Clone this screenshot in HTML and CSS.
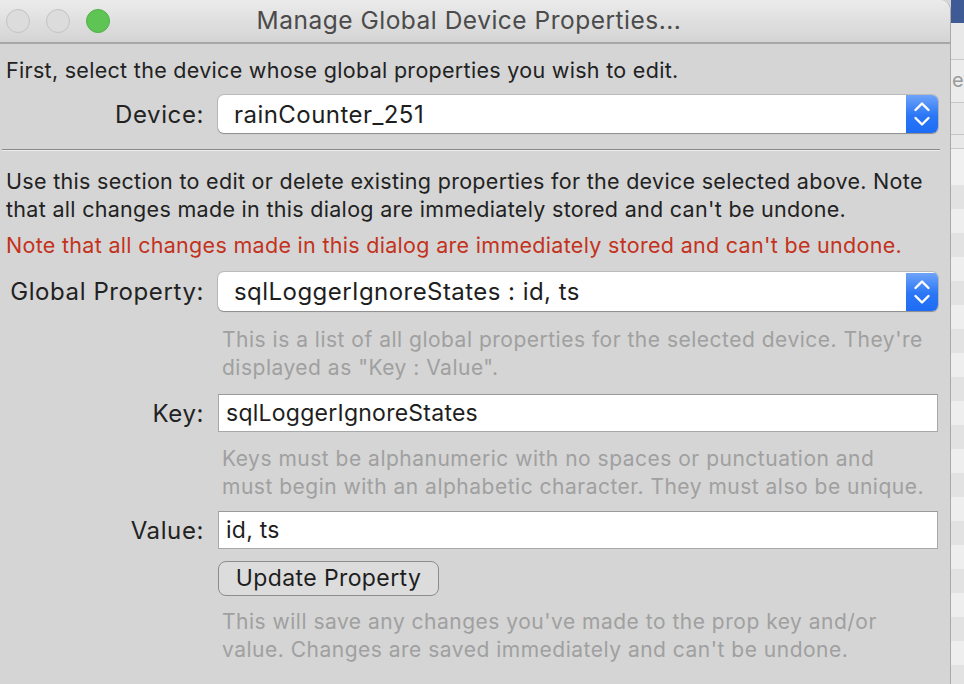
FILE: index.html
```html
<!DOCTYPE html>
<html>
<head>
<meta charset="utf-8">
<link rel="stylesheet" href="styles.css">
</head>
<body>
<div class="screen">
  <div class="window">
    <div class="titlebar">
      <div class="lights">
        <span class="light"></span>
        <span class="light"></span>
        <span class="light green"></span>
      </div>
      <div class="title">Manage Global Device Properties...</div>
    </div>
    <div class="content">
      <p class="intro">First, select the device whose global properties you wish to edit.</p>
      <div class="row row-device">
        <label class="label">Device:</label>
        <div class="select">
          <span class="select-text">rainCounter_251</span>
          <span class="stepper">
            <svg width="32" height="38" viewBox="0 0 32 38"><path d="M9.5 15 L16 8.5 L22.5 15" fill="none" stroke="#fff" stroke-width="2.4" stroke-linecap="round" stroke-linejoin="round"/><path d="M9.5 23 L16 29.5 L22.5 23" fill="none" stroke="#fff" stroke-width="2.4" stroke-linecap="round" stroke-linejoin="round"/></svg>
          </span>
        </div>
      </div>
      <div class="separator"></div>
      <p class="para">Use this section to edit or delete existing properties for the device selected above. Note that all changes made in this dialog are immediately stored and can't be undone.</p>
      <p class="warn">Note that all changes made in this dialog are immediately stored and can't be undone.</p>
      <div class="row row-prop">
        <label class="label">Global Property:</label>
        <div class="select">
          <span class="select-text">sqlLoggerIgnoreStates : id, ts</span>
          <span class="stepper">
            <svg width="32" height="38" viewBox="0 0 32 38"><path d="M9.5 15 L16 8.5 L22.5 15" fill="none" stroke="#fff" stroke-width="2.4" stroke-linecap="round" stroke-linejoin="round"/><path d="M9.5 23 L16 29.5 L22.5 23" fill="none" stroke="#fff" stroke-width="2.4" stroke-linecap="round" stroke-linejoin="round"/></svg>
          </span>
        </div>
      </div>
      <p class="help help-prop">This is a list of all global properties for the selected device. They're displayed as "Key : Value".</p>
      <div class="row row-key">
        <label class="label">Key:</label>
        <div class="field">sqlLoggerIgnoreStates</div>
      </div>
      <p class="help help-key">Keys must be alphanumeric with no spaces or punctuation and must begin with an alphabetic character. They must also be unique.</p>
      <div class="row row-value">
        <label class="label">Value:</label>
        <div class="field">id, ts</div>
      </div>
      <div class="row row-button">
        <span></span>
        <div><button class="button">Update Property</button></div>
      </div>
      <p class="help help-save">This will save any changes you've made to the prop key and/or value. Changes are saved immediately and can't be undone.</p>
    </div>
  </div>
  <div class="backdrop">
    <div class="bd-top"></div>
    <div class="bd-a"></div>
    <div class="bd-b"><span class="bd-text">et</span></div>
    <div class="bd-c"></div>
    <div class="bd-d"></div>
    <div class="bd-e"></div>
    <div class="bd-stripes"></div>
  </div>
</div>
</body>
</html>
```

FILE: styles.css
```css
* { box-sizing: border-box; }
html, body { margin: 0; padding: 0; }
body {
  width: 964px;
  height: 684px;
  overflow: hidden;
  font-family: Inter, "Noto Sans", "Liberation Sans", sans-serif;
  background: #d6d6d6;
}
.screen {
  display: flex;
  width: 964px;
  height: 684px;
}
.window {
  width: 951px;
  flex: none;
  background: #d5d5d5;
  border-top-right-radius: 10px;
  border-right: 1px solid #a9a9a9;
  overflow: hidden;
}
.titlebar {
  height: 44px;
  background: linear-gradient(#ebebeb, #d4d4d4);
  border-bottom: 2px solid #a6a6a6;
  display: flex;
  align-items: center;
}
.lights {
  display: flex;
  gap: 16px;
  padding-left: 6px;
}
.light {
  width: 24px;
  height: 24px;
  border-radius: 50%;
  background: #dcdcdc;
  border: 1px solid #c3c3c3;
}
.light.green {
  background: #5ec453;
  border-color: #52b04a;
}
.title {
  flex: 1;
  text-align: center;
  font-size: 24.5px;
  letter-spacing: 0.5px;
  color: #4b4b4b;
  padding-right: 122px;
  padding-bottom: 2px;
}
.content {
  padding: 12px 12px 0 6px;
  color: #222;
  font-size: 21.5px;
  letter-spacing: 0.3px;
}
p { margin: 0; }
.intro {
  line-height: 28px;
}
.row {
  display: grid;
  grid-template-columns: 198px 1fr;
  column-gap: 14px;
  align-items: center;
}
.label {
  text-align: right;
  font-size: 24px;
  letter-spacing: 0.6px;
  color: #222;
}
.row-device { margin-top: 11px; }
.select {
  height: 38px;
  background: #fff;
  border-radius: 6px;
  box-shadow: 0 0 0 1px rgba(0,0,0,0.12), 0 1px 1px rgba(0,0,0,0.25);
  display: flex;
  align-items: center;
  overflow: hidden;
}
.select-text {
  flex: 1;
  padding-left: 16px;
  font-size: 24px;
  letter-spacing: 0.45px;
  color: #1e1e1e;
}
.stepper {
  width: 32px;
  height: 38px;
  background: linear-gradient(#6ea3f8, #2a76f6 55%, #1d6cf4);
  display: flex;
}
.separator {
  margin: 16px -2px 0 -4px;
  height: 2px;
  border-top: 1px solid #8a8a8a;
  border-bottom: 1px solid #ececec;
}
.para {
  margin-top: 16px;
  line-height: 28px;
}
.warn {
  margin-top: 8px;
  line-height: 28px;
  color: #c3321c;
}
.row-prop { margin-top: 13px; }
.row-prop .select { height: 39px; }
.help {
  color: #a0a0a0;
  font-size: 21px;
  letter-spacing: 0.5px;
  line-height: 28px;
  padding-left: 216px;
  padding-right: 10px;
}
.help-prop { margin-top: 15px; }
.row-key { margin-top: 12px; }
.field {
  height: 38px;
  background: #fff;
  border: 1px solid #a8a8a8;
  border-top-color: #9a9a9a;
  font-size: 23px;
  letter-spacing: 0.25px;
  color: #1e1e1e;
  padding-left: 7px;
  line-height: 36px;
}
.help-key { margin-top: 13px; }
.row-value { margin-top: 10px; }
.row-button { margin-top: 12px; }
.button {
  font-family: inherit;
  font-size: 23px;
  letter-spacing: 0.4px;
  color: #1e1e1e;
  height: 35px;
  width: 221px;
  background: #dcdcdc;
  border: 1.5px solid #8c8c8c;
  border-radius: 8px;
  padding: 0 0 1px;
}
.help-save { margin-top: 12px; }

.backdrop {
  flex: 1;
  background: #e4e4e4;
  display: flex;
  flex-direction: column;
  overflow: hidden;
}
.bd-top { height: 23px; background: #3f5b95; }
.bd-a { height: 37px; background: #e8e8e8; border-bottom: 1px solid #c8c8c8; }
.bd-b { height: 43px; background: #ececec; border-bottom: 1px solid #c8c8c8; }
.bd-text {
  display: block;
  margin-top: 8px;
  margin-left: 1px;
  font-size: 20px;
  color: #9a9a9a;
  white-space: nowrap;
}
.bd-c { height: 32px; background: #e6e6e6; border-bottom: 1px solid #c4c4c4; }
.bd-d { height: 13px; background: #e8e8e8; }
.bd-e { height: 37px; background: #f0f0f0; border-top: 1px solid #c8c8c8; }
.bd-stripes {
  flex: 1;
  background: repeating-linear-gradient(#e2e2e2 0 24px, #eeeeee 24px 48px);
}
```
